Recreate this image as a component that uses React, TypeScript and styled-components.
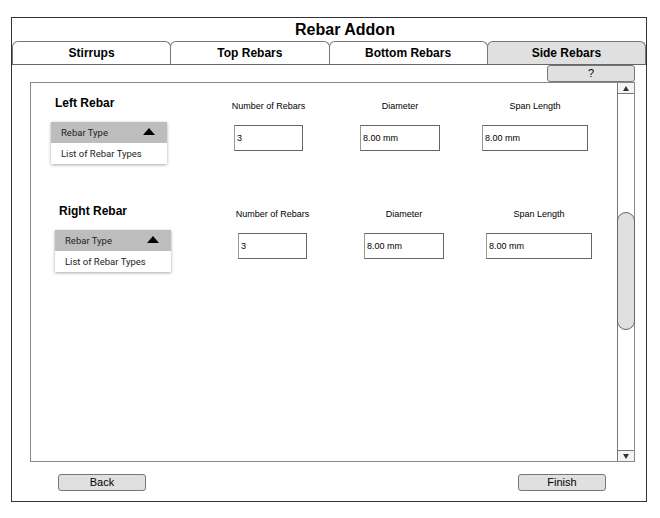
import styled, { createGlobalStyle } from "styled-components";

const GlobalStyle = createGlobalStyle`
  body {
    margin: 0;
    background: #fff;
    font-family: "Liberation Sans", Arial, sans-serif;
  }
`;

const Page = styled.div`
  padding: 17px 0 0 11px;
`;
const Frame = styled.div`
  width: 636px;
  height: 485px;
  box-sizing: border-box;
  border: 1px solid #333;
  display: flex;
  flex-direction: column;
`;
const Title = styled.h1`
  margin: 0;
  height: 23px;
  padding-left: 32px;
  font-size: 16px;
  font-weight: bold;
  line-height: 23px;
  text-align: center;
  color: #000;
`;
const TabBar = styled.div`
  display: flex;
  height: 23px;
  border-bottom: 1px solid #666;
`;
const Tab = styled.div<{ $active?: boolean }>`
  flex: 1;
  box-sizing: border-box;
  border: 1px solid #777;
  border-bottom: none;
  border-radius: 6px 6px 0 0;
  margin-left: -1px;
  background: ${(p) => (p.$active ? "#e0e0e0" : "#fff")};
  font-size: 12px;
  font-weight: bold;
  line-height: 22px;
  text-align: center;
  color: #000;
  &:first-child {
    margin-left: 0;
  }
`;
const Body = styled.div`
  flex: 1;
  display: flex;
  flex-direction: column;
  padding: 0 11px 0 18px;
`;
const HelpRow = styled.div`
  display: flex;
  justify-content: flex-end;
`;
const SmallButton = styled.div`
  width: 88px;
  height: 17px;
  box-sizing: border-box;
  border: 1px solid #777;
  border-radius: 3px;
  background: #e0e0e0;
  font-size: 11px;
  line-height: 15px;
  text-align: center;
  color: #000;
`;
const Panel = styled.div`
  height: 380px;
  box-sizing: border-box;
  border: 1px solid #888;
  display: flex;
`;
const Content = styled.div`
  flex: 1;
`;
const Section = styled.div<{ $indent: number }>`
  height: 108px;
  display: flex;
  padding-left: ${(p) => p.$indent}px;
`;
const TypeColumn = styled.div`
  width: 116px;
  display: flex;
  flex-direction: column;
`;
const SectionTitle = styled.div`
  margin: 13px 0 12px 4px;
  font-size: 12px;
  font-weight: bold;
  line-height: 14px;
  color: #000;
`;
const Dropdown = styled.div`
  background: #fff;
  box-shadow: 0 1px 3px rgba(0, 0, 0, 0.35);
  font-family: Roboto, "Liberation Sans", sans-serif;
  font-size: 9.5px;
  color: #222;
`;
const DropdownHead = styled.div`
  height: 21px;
  display: flex;
  align-items: center;
  justify-content: space-between;
  padding: 0 12px 0 10px;
  background: #bdbdbd;
`;
const Arrow = styled.span`
  width: 0;
  height: 0;
  border-left: 6px solid transparent;
  border-right: 6px solid transparent;
  border-bottom: 7px solid #000;
  margin-bottom: 3px;
`;
const DropdownItem = styled.div`
  height: 21px;
  line-height: 21px;
  padding-left: 10px;
`;
const Field = styled.div<{ $width: number; $gap: number }>`
  width: ${(p) => p.$width}px;
  margin-left: ${(p) => p.$gap}px;
  display: flex;
  flex-direction: column;
  align-items: center;
`;
const Label = styled.div`
  margin-top: 18px;
  height: 11px;
  font-size: 9px;
  line-height: 11px;
  white-space: nowrap;
  color: #000;
`;
const Input = styled.div`
  margin-top: 13px;
  width: 100%;
  height: 26px;
  box-sizing: border-box;
  border: 1px solid #666;
  border-left-color: #999;
  padding-left: 2px;
  font-size: 9px;
  line-height: 24px;
  color: #000;
`;
const ScrollBar = styled.div`
  width: 16px;
  border-left: 1px solid #777;
  display: flex;
  flex-direction: column;
`;
const ScrollButton = styled.div<{ $down?: boolean }>`
  height: 10px;
  display: flex;
  align-items: center;
  justify-content: center;
  border-${(p) => (p.$down ? "top" : "bottom")}: 1px solid #777;
  margin-top: ${(p) => (p.$down ? "auto" : "0")};
  background: #f4f4f4;
  &::after {
    content: "";
    border-left: 3.5px solid transparent;
    border-right: 3.5px solid transparent;
    border-${(p) => (p.$down ? "top" : "bottom")}: 5px solid #333;
  }
`;
const Thumb = styled.div`
  margin: 118px -1px 0 -1px;
  height: 118px;
  box-sizing: border-box;
  border: 1px solid #666;
  border-radius: 9px;
  background: #e0e0e0;
`;
const Footer = styled.div`
  display: flex;
  justify-content: space-between;
  padding: 12px 29px 0 28px;
`;

const fields = [
  { label: "Number of Rebars", value: "3", width: 69, gap: 67 },
  { label: "Diameter", value: "8.00 mm", width: 80, gap: 57 },
  { label: "Span Length", value: "8.00 mm", width: 106, gap: 42 },
];

function RebarSection({ title, indent }: { title: string; indent: number }) {
  return (
    <Section $indent={indent}>
      <TypeColumn>
        <SectionTitle>{title}</SectionTitle>
        <Dropdown>
          <DropdownHead>
            Rebar Type
            <Arrow />
          </DropdownHead>
          <DropdownItem>List of Rebar Types</DropdownItem>
        </Dropdown>
      </TypeColumn>
      {fields.map((f) => (
        <Field key={f.label} $width={f.width} $gap={f.gap}>
          <Label>{f.label}</Label>
          <Input>{f.value}</Input>
        </Field>
      ))}
    </Section>
  );
}

export default function App() {
  return (
    <Page>
      <GlobalStyle />
      <Frame>
        <Title>Rebar Addon</Title>
        <TabBar>
          <Tab>Stirrups</Tab>
          <Tab>Top Rebars</Tab>
          <Tab>Bottom Rebars</Tab>
          <Tab $active>Side Rebars</Tab>
        </TabBar>
        <Body>
          <HelpRow>
            <SmallButton>?</SmallButton>
          </HelpRow>
          <Panel>
            <Content>
              <RebarSection title="Left Rebar" indent={20} />
              <RebarSection title="Right Rebar" indent={24} />
            </Content>
            <ScrollBar>
              <ScrollButton />
              <Thumb />
              <ScrollButton $down />
            </ScrollBar>
          </Panel>
          <Footer>
            <SmallButton>Back</SmallButton>
            <SmallButton>Finish</SmallButton>
          </Footer>
        </Body>
      </Frame>
    </Page>
  );
}
